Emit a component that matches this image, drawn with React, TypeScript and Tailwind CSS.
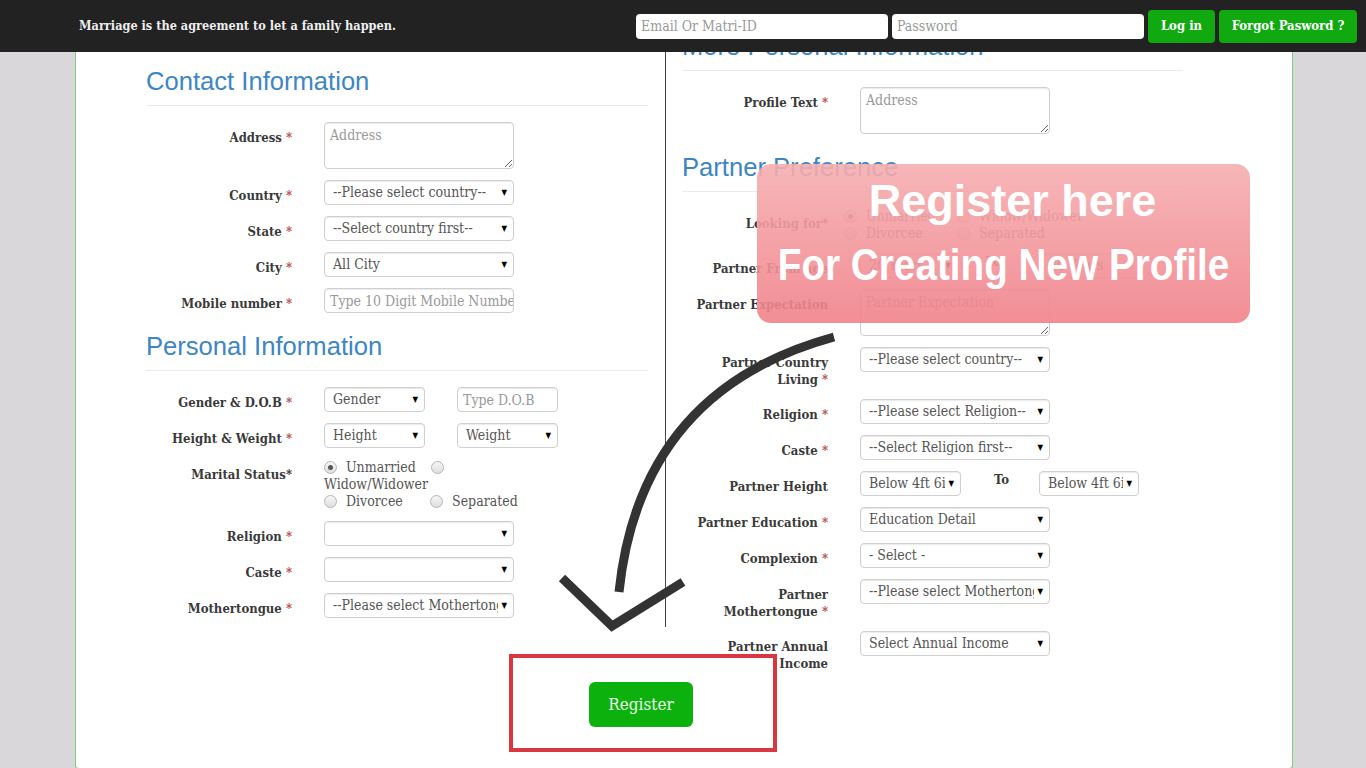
import React from 'react';

const serif = "font-['DejaVu_Serif_Condensed','DejaVu_Serif',serif]";

function Star({ tight }: { tight?: boolean }) {
  return <span className={tight ? 'text-[#333]' : 'text-[#b94a48]'}>{tight ? '*' : ' *'}</span>;
}

function Label({ children }: { children: React.ReactNode }) {
  return (
    <div className="w-[146px] shrink-0 pt-[7px] text-right text-[13px] leading-[17px] font-bold text-[#3a3a3a]">
      {children}
    </div>
  );
}

function Select({ text, w = 'w-[190px]' }: { text: string; w?: string }) {
  return (
    <div
      className={`${w} flex h-[25px] items-center rounded-[4px] border border-[#cfcfcf] bg-white pl-[8px] pr-[6px] text-[14px] text-[#555] shadow-[inset_0_1px_1px_rgba(0,0,0,0.08)]`}
    >
      <span className="flex-1 overflow-hidden whitespace-nowrap">{text}</span>
      <span className="ml-[3px] text-[8px] text-black">▼</span>
    </div>
  );
}

function TextInput({ placeholder, w = 'w-[190px]' }: { placeholder: string; w?: string }) {
  return (
    <input
      readOnly
      placeholder={placeholder}
      className={`${w} h-[25px] rounded-[4px] border border-[#cfcfcf] bg-white pl-[5px] text-[14px] text-[#555] outline-none placeholder:text-[#999] shadow-[inset_0_1px_1px_rgba(0,0,0,0.08)]`}
    />
  );
}

function TextArea({ placeholder }: { placeholder: string }) {
  return (
    <textarea
      readOnly
      placeholder={placeholder}
      className="block h-[47px] w-[190px] rounded-[4px] border border-[#cfcfcf] bg-white px-[5px] pt-[3px] text-[14px] leading-[18px] text-[#555] outline-none placeholder:text-[#999] shadow-[inset_0_1px_1px_rgba(0,0,0,0.08)]"
    />
  );
}

function Radio({ on }: { on?: boolean }) {
  return (
    <span className="inline-flex h-[13px] w-[13px] shrink-0 items-center justify-center rounded-full border border-[#b5b5b5] bg-gradient-to-b from-[#f6f6f6] to-[#dedede]">
      {on && <span className="h-[5px] w-[5px] rounded-full bg-[#555]" />}
    </span>
  );
}

function Opt({ on, text, w }: { on?: boolean; text: string; w?: string }) {
  return (
    <span className={`flex items-center ${w ?? ''}`}>
      <Radio on={on} />
      <span className="ml-[9px] whitespace-nowrap">{text}</span>
    </span>
  );
}

function Heading({ children }: { children: React.ReactNode }) {
  return (
    <div>
      <h2 className="h-[30px] whitespace-nowrap font-['Liberation_Sans',Arial,sans-serif] text-[25.6px] leading-[30px] text-[#3c86c4]">
        {children}
      </h2>
      <div className="mt-[9px] h-px bg-[#eaeaea]" />
    </div>
  );
}

function Row({ label, children }: { label: React.ReactNode; children: React.ReactNode }) {
  return (
    <div className="flex items-start">
      <Label>{label}</Label>
      <div className="ml-[32px] flex items-start">{children}</div>
    </div>
  );
}

export default function App() {
  return (
    <div className={`relative h-[768px] overflow-hidden bg-[#d9d7d9] ${serif}`}>
      {/* fixed top bar */}
      <nav className="fixed inset-x-0 top-0 z-20 flex h-[52px] items-center bg-[#222] pl-[79px] pr-[9px]">
        <span className="text-[12.6px] font-bold text-[#eee]">Marriage is the agreement to let a family happen.</span>
        <div className="ml-auto flex items-center gap-[4px]">
          <input
            readOnly
            placeholder="Email Or Matri-ID"
            className="h-[25px] w-[252px] rounded-[4px] bg-white pl-[5px] text-[14px] outline-none placeholder:text-[#999]"
          />
          <input
            readOnly
            placeholder="Password"
            className="h-[25px] w-[252px] rounded-[4px] bg-white pl-[5px] text-[14px] outline-none placeholder:text-[#999]"
          />
          <button className="h-[33px] w-[67px] rounded-[4px] bg-[#10a910] text-[13px] font-bold text-white">Log in</button>
          <button className="h-[33px] w-[138px] rounded-[4px] bg-[#10a910] text-[13px] font-bold text-white">
            Forgot Pasword ?
          </button>
        </div>
      </nav>

      {/* form card, scrolled so its top sits under the bar */}
      <div className="ml-[75px] w-[1218px] rounded-b-[4px] border-x border-b border-[#7fcd7f] bg-white">
        <div className="flex items-start">
          {/* left column */}
          <div className="w-[590px] border-r border-[#444] pb-[9px] pl-[70px] pr-[17px] pt-[66px]">
            <Heading>Contact Information</Heading>
            <div className="mt-[16px] flex flex-col gap-[11px]">
              <Row label={<>Address<Star /></>}>
                <TextArea placeholder="Address" />
              </Row>
              <Row label={<>Country<Star /></>}>
                <Select text="--Please select country--" />
              </Row>
              <Row label={<>State<Star /></>}>
                <Select text="--Select country first--" />
              </Row>
              <Row label={<>City<Star /></>}>
                <Select text="All City" />
              </Row>
              <Row label={<>Mobile number<Star /></>}>
                <TextInput placeholder="Type 10 Digit Mobile Number" />
              </Row>
            </div>

            <div className="mt-[18px]">
              <Heading>Personal Information</Heading>
            </div>
            <div className="mt-[16px] flex flex-col gap-[11px]">
              <Row label={<>Gender &amp; D.O.B<Star /></>}>
                <Select text="Gender" w="w-[101px]" />
                <div className="ml-[32px]">
                  <TextInput placeholder="Type D.O.B" w="w-[101px]" />
                </div>
              </Row>
              <Row label={<>Height &amp; Weight<Star /></>}>
                <Select text="Height" w="w-[101px]" />
                <div className="ml-[32px]">
                  <Select text="Weight" w="w-[101px]" />
                </div>
              </Row>
              <Row label={<>Marital Status<Star tight /></>}>
                <div className="w-[196px] text-[14px] leading-[17px] text-[#555]">
                  <div className="flex h-[17px] items-center">
                    <Opt on text="Unmarried" w="w-[107px]" />
                    <Radio />
                  </div>
                  <div className="h-[17px] whitespace-nowrap">Widow/Widower</div>
                  <div className="flex h-[17px] items-center">
                    <Opt text="Divorcee" w="w-[106px]" />
                    <Opt text="Separated" />
                  </div>
                </div>
              </Row>
              <Row label={<>Religion<Star /></>}>
                <Select text="" />
              </Row>
              <Row label={<>Caste<Star /></>}>
                <Select text="" />
              </Row>
              <Row label={<>Mothertongue<Star /></>}>
                <Select text="--Please select Mothertongue--" />
              </Row>
            </div>
          </div>

          {/* right column */}
          <div className="pl-[16px] pt-[31px]">
            <div className="w-[501px]">
              <Heading>More Personal Information</Heading>
              <div className="mt-[16px]">
                <Row label={<>Profile Text<Star /></>}>
                  <TextArea placeholder="Address" />
                </Row>
              </div>
              <div className="mt-[18px]">
                <Heading>Partner Preference</Heading>
              </div>
              <div className="mt-[16px] flex flex-col gap-[11px]">
                <div className="flex items-start">
                  <Label>
                    Looking for<Star tight />
                  </Label>
                  <div className="ml-[16px] text-[14px] leading-[17px] text-[#555]">
                    <div className="flex h-[17px] items-center">
                      <Opt on text="Unmarried" w="w-[113px]" />
                      <Opt text="Widow/Widower" />
                    </div>
                    <div className="flex h-[17px] items-center">
                      <Opt text="Divorcee" w="w-[113px]" />
                      <Opt text="Separated" />
                    </div>
                  </div>
                </div>
                <Row label={<>Partner From age</>}>
                  <Select text="20 Years" w="w-[98px]" />
                  <span className="ml-[28px] w-[54px] text-[13px] font-bold leading-[17px] text-[#3a3a3a]">To</span>
                  <Select text="30 Years" w="w-[100px]" />
                </Row>
                <Row label="Partner Expectation">
                  <TextArea placeholder="Partner Expectation" />
                </Row>
                <Row
                  label={
                    <>
                      Partner Country
                      <br />
                      Living<Star />
                    </>
                  }
                >
                  <Select text="--Please select country--" />
                </Row>
                <Row label={<>Religion<Star /></>}>
                  <Select text="--Please select Religion--" />
                </Row>
                <Row label={<>Caste<Star /></>}>
                  <Select text="--Select Religion first--" />
                </Row>
                <Row label="Partner Height">
                  <Select text="Below 4ft 6in" w="w-[101px]" />
                  <span className="ml-[33px] w-[45px] text-[13px] font-bold leading-[17px] text-[#3a3a3a]">To</span>
                  <Select text="Below 4ft 6in" w="w-[100px]" />
                </Row>
                <Row label={<>Partner Education<Star /></>}>
                  <Select text="Education Detail" />
                </Row>
                <Row label={<>Complexion<Star /></>}>
                  <Select text="- Select -" />
                </Row>
                <Row
                  label={
                    <>
                      Partner
                      <br />
                      Mothertongue<Star />
                    </>
                  }
                >
                  <Select text="--Please select Mothertongue--" />
                </Row>
                <Row
                  label={
                    <>
                      Partner Annual
                      <br />
                      Income
                    </>
                  }
                >
                  <Select text="Select Annual Income" />
                </Row>
              </div>
            </div>
          </div>
        </div>

        <div className="pb-[41px] pl-[513px] pt-[10px]">
          <button className="h-[45px] w-[104px] rounded-[6px] bg-[#0db10d] text-[17px] text-[#eaffea]">Register</button>
        </div>
      </div>

      {/* annotation: callout */}
      <div className="absolute left-[757px] top-[164px] flex h-[159px] w-[493px] flex-col items-center rounded-[14px] bg-gradient-to-b from-[#f5aeb0]/90 to-[#f0818a]/90 pt-[5px] font-['Liberation_Sans',Arial,sans-serif] text-[45px] font-bold leading-[64px] text-white">
        <span className="inline-block whitespace-nowrap pl-[18px]">Register here</span>
        <span className="inline-block scale-x-[0.86] whitespace-nowrap">For Creating New Profile</span>
      </div>

      {/* annotation: red box around button */}
      <div className="absolute left-[509px] top-[654px] h-[98px] w-[268px] border-[4px] border-[#d8373f]" />

      {/* annotation: curved arrow */}
      <svg className="pointer-events-none absolute inset-0" width="1366" height="768" viewBox="0 0 1366 768">
        <path d="M834 337 Q640 390 619 592" fill="none" stroke="#333" strokeWidth="9" />
        <polyline points="562,578 612,626 683,582" fill="none" stroke="#333" strokeWidth="9" />
      </svg>
    </div>
  );
}
